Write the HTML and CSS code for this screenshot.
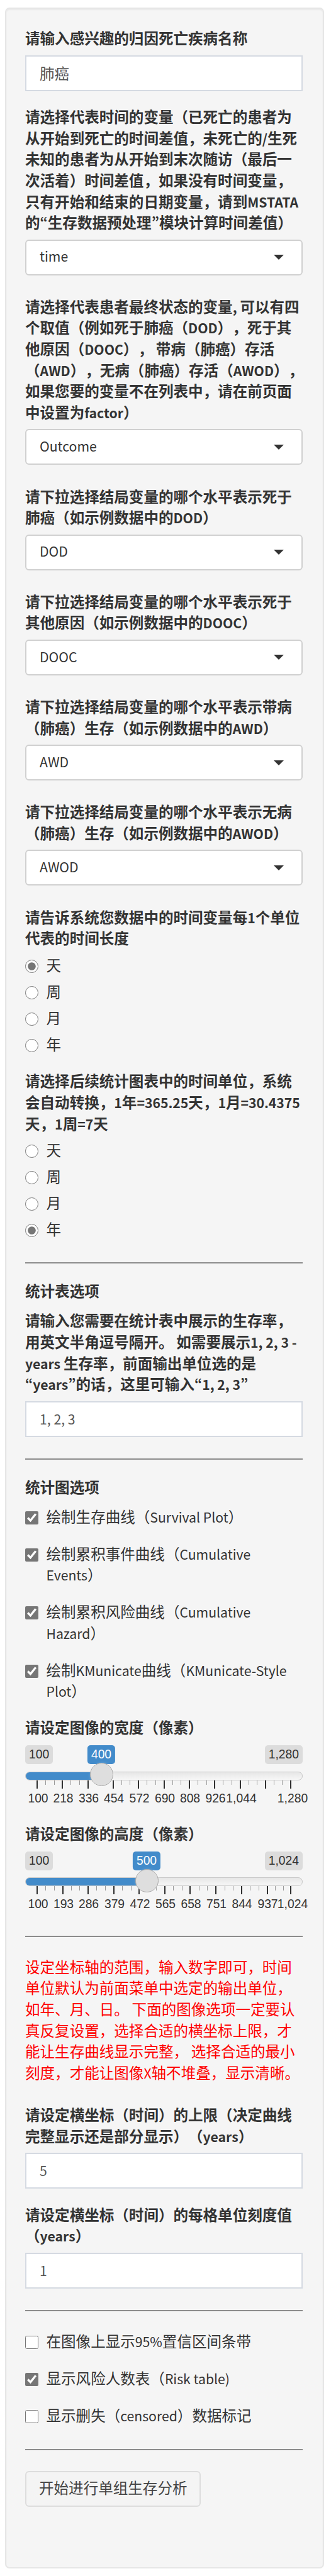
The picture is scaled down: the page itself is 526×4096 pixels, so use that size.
FILE: index.html
```html
<!DOCTYPE html>
<html lang="zh-CN">
<head>
<meta charset="utf-8">
<title>单组生存分析</title>
<link rel="stylesheet" href="styles.css">
</head>

<body>
<form class="well">
	<div class="form-group">
		<label class="control-label">请输入感兴趣的归因死亡疾病名称</label>
		<input type="text" class="form-control zh" value="肺癌">
	</div>

	<div class="form-group select">
		<label class="control-label">请选择代表时间的变量（已死亡的患者为<br>从开始到死亡的时间差值，未死亡的<span class="l">/</span>生死<br>未知的患者为从开始到末次随访（最后一<br>次活着）时间差值，如果没有时间变量，<br>只有开始和结束的日期变量，请到<span class="l">MSTATA</span><br>的<span class="l">“</span>生存数据预处理<span class="l">”</span>模块计算时间差值）</label>
		<div class="selectize"><div><span class="l">time</span></div><i class="caret"></i></div>
	</div>

	<div class="form-group select">
		<label class="control-label">请选择代表患者最终状态的变量<span class="l">, </span>可以有四<br>个取值（例如死于肺癌（<span class="l">DOD</span>），死于其<br>他原因（<span class="l">DOOC</span>），<span class="l"> </span>带病（肺癌）存活<br>（<span class="l">AWD</span>），无病（肺癌）存活（<span class="l">AWOD</span>），<br>如果您要的变量不在列表中，请在前页面<br>中设置为<span class="l">factor</span>）</label>
		<div class="selectize"><div><span class="l">Outcome</span></div><i class="caret"></i></div>
	</div>

	<div class="form-group select">
		<label class="control-label">请下拉选择结局变量的哪个水平表示死于<br>肺癌（如示例数据中的<span class="l">DOD</span>）</label>
		<div class="selectize"><div><span class="l">DOD</span></div><i class="caret"></i></div>
	</div>

	<div class="form-group select">
		<label class="control-label">请下拉选择结局变量的哪个水平表示死于<br>其他原因（如示例数据中的<span class="l">DOOC</span>）</label>
		<div class="selectize"><div><span class="l">DOOC</span></div><i class="caret"></i></div>
	</div>

	<div class="form-group select">
		<label class="control-label">请下拉选择结局变量的哪个水平表示带病<br>（肺癌）生存（如示例数据中的<span class="l">AWD</span>）</label>
		<div class="selectize"><div><span class="l">AWD</span></div><i class="caret"></i></div>
	</div>

	<div class="form-group select">
		<label class="control-label">请下拉选择结局变量的哪个水平表示无病<br>（肺癌）生存（如示例数据中的<span class="l">AWOD</span>）</label>
		<div class="selectize"><div><span class="l">AWOD</span></div><i class="caret"></i></div>
	</div>

	<div class="form-group radios">
		<label class="control-label">请告诉系统您数据中的时间变量每<span class="l">1</span>个单位<br>代表的时间长度</label>
		<label class="radio"><input type="radio" name="unit_in" checked><span>天</span></label>
		<label class="radio"><input type="radio" name="unit_in"><span>周</span></label>
		<label class="radio"><input type="radio" name="unit_in"><span>月</span></label>
		<label class="radio"><input type="radio" name="unit_in"><span>年</span></label>
	</div>

	<div class="form-group radios">
		<label class="control-label">请选择后续统计图表中的时间单位，系统<br>会自动转换，<span class="l">1</span>年<span class="l">=365.25</span>天，<span class="l">1</span>月<span class="l">=30.4375</span><br>天，<span class="l">1</span>周<span class="l">=7</span>天</label>
		<label class="radio"><input type="radio" name="unit_out"><span>天</span></label>
		<label class="radio"><input type="radio" name="unit_out"><span>周</span></label>
		<label class="radio"><input type="radio" name="unit_out"><span>月</span></label>
		<label class="radio"><input type="radio" name="unit_out" checked><span>年</span></label>
	</div>

	<hr>

	<div class="title">统计表选项</div>
	<div class="form-group before-hr">
		<label class="control-label">请输入您需要在统计表中展示的生存率，<br>用英文半角逗号隔开。<span class="l"> </span>如需要展示<span class="l">1, 2, 3 -</span><br><span class="l">years </span>生存率，前面输出单位选的是<br><span class="l">“years”</span>的话，这里可输入<span class="l">“1, 2, 3”</span></label>
		<input type="text" class="form-control" value="1, 2, 3">
	</div>

	<hr>

	<div class="title">统计图选项</div>
	<div class="checks">
		<label class="checkbox"><input type="checkbox" checked><span>绘制生存曲线（<span class="l">Survival Plot</span>）</span></label>
		<label class="checkbox"><input type="checkbox" checked><span>绘制累积事件曲线（<span class="l">Cumulative</span><br><span class="l">Events</span>）</span></label>
		<label class="checkbox"><input type="checkbox" checked><span>绘制累积风险曲线（<span class="l">Cumulative</span><br><span class="l">Hazard</span>）</span></label>
		<label class="checkbox"><input type="checkbox" checked><span>绘制<span class="l">KMunicate</span>曲线（<span class="l">KMunicate-Style</span><br><span class="l">Plot</span>）</span></label>
	</div>

	<div class="slider">
		<label class="control-label">请设定图像的宽度（像素）</label>
		<div class="irs">
			<div class="irs-tips"><span>100</span><span>1,280</span></div>
			<div class="irs-line"><div class="irs-bar" style="width:121px"></div></div>
			<span class="irs-single" style="left:121px">400</span>
			<i class="irs-handle" style="left:121px"></i>
			<svg class="irs-grid" width="440" height="46">
				<path class="small" d="M32.5 0v7M46.5 0v7M72.5 0v7M86.5 0v7M113.5 0v7M126.5 0v7M153.5 0v7M166.5 0v7M193.5 0v7M207.5 0v7M234.5 0v7M247.5 0v7M274.5 0v7M288.5 0v7M314.5 0v7M328.5 0v7M355.5 0v7M368.5 0v7M395.5 0v7M408.5 0v7"/>
				<path class="big" d="M19 0v13M59 0v13M100 0v13M140 0v13M180 0v13M221 0v13M261 0v13M301 0v13M342 0v13M382 0v13M422 0v13"/>
				<text x="20.5" y="35">100</text><text x="60.5" y="35">218</text><text x="101" y="35">336</text><text x="141" y="35">454</text><text x="181.5" y="35">572</text><text x="222" y="35">690</text><text x="262" y="35">808</text><text x="302.5" y="35">926</text><text x="343.5" y="35">1,044</text><text x="425" y="35">1,280</text>
			</svg>
		</div>
	</div>

	<div class="slider">
		<label class="control-label">请设定图像的高度（像素）</label>
		<div class="irs">
			<div class="irs-tips"><span>100</span><span>1,024</span></div>
			<div class="irs-line"><div class="irs-bar" style="width:193px"></div></div>
			<span class="irs-single" style="left:193px">500</span>
			<i class="irs-handle" style="left:193px"></i>
			<svg class="irs-grid" width="440" height="46">
				<path class="small" d="M32.5 0v7M46.5 0v7M73.5 0v7M86.5 0v7M113.5 0v7M127.5 0v7M154.5 0v7M168.5 0v7M195.5 0v7M208.5 0v7M235.5 0v7M249.5 0v7M276.5 0v7M289.5 0v7M317.5 0v7M330.5 0v7M357.5 0v7M371.5 0v7M397.5 0v7M410.5 0v7"/>
				<path class="big" d="M19 0v13M60 0v13M100 0v13M141 0v13M181 0v13M222 0v13M262 0v13M303 0v13M344 0v13M385 0v13M422 0v13"/>
				<text x="20.5" y="35">100</text><text x="61" y="35">193</text><text x="101" y="35">286</text><text x="142" y="35">379</text><text x="182.5" y="35">472</text><text x="223" y="35">565</text><text x="263.5" y="35">658</text><text x="304" y="35">751</text><text x="344.5" y="35">844</text><text x="385.5" y="35">937</text><text x="425" y="35">1,024</text>
			</svg>
		</div>
	</div>

	<hr class="after-slider">

	<p class="warn">设定坐标轴的范围，输入数字即可，时间<br>单位默认为前面菜单中选定的输出单位，<br>如年、月、日。<span class="l"> </span>下面的图像选项一定要认<br>真反复设置，选择合适的横坐标上限，才<br>能让生存曲线显示完整，<span class="l"> </span>选择合适的最小<br>刻度，才能让图像<span class="l">X</span>轴不堆叠，显示清晰。</p>

	<div class="form-group">
		<label class="control-label">请设定横坐标（时间）的上限（决定曲线<br>完整显示还是部分显示）（<span class="l">years</span>）</label>
		<input type="text" class="form-control" value="5">
	</div>
	<div class="form-group before-hr">
		<label class="control-label">请设定横坐标（时间）的每格单位刻度值<br>（<span class="l">years</span>）</label>
		<input type="text" class="form-control" value="1">
	</div>

	<hr>

	<div class="checks last">
		<label class="checkbox"><input type="checkbox"><span>在图像上显示<span class="l">95%</span>置信区间条带</span></label>
		<label class="checkbox"><input type="checkbox" checked><span>显示风险人数表（<span class="l">Risk table)</span></span></label>
		<label class="checkbox"><input type="checkbox"><span>显示删失（<span class="l">censored</span>）数据标记</span></label>
	</div>

	<hr>

	<button type="button" class="btn">开始进行单组生存分析</button>
</form>
</body>
</html>
```

FILE: styles.css
```css
* {box-sizing:border-box;}
body {margin:0;background:#fff;color:#333;font:23.55px/33.62px "Liberation Sans","Noto Sans CJK SC",sans-serif;text-spacing-trim:space-all;}
/* latin runs are set a little smaller than the hanzi */
.l {font-family:"Noto Sans CJK SC",sans-serif;font-size:21.2px;line-height:1;font-feature-settings:"pwid";white-space:pre;}

.well {width:507px;height:4072px;margin:12px 0 0 7.5px;padding:32.2px 31.5px 0 30.5px;background:#f5f5f5;border:2px solid #e6e6e6;border-radius:7px;box-shadow:inset 0 2px 2px rgba(0,0,0,.05);}

.control-label {display:block;margin-bottom:7.8px;font-weight:700;white-space:nowrap;}
.form-group {margin-bottom:26.2px;}
.form-group.select {margin-bottom:35.1px;}
.form-group.before-hr {margin-bottom:34px;}
.form-control {display:block;width:100%;height:57.3px;padding:0 21px 2px;border:2px solid #d5dae2;border-radius:0;background:#fff;color:#555;font:21.2px "Noto Sans CJK SC",sans-serif;outline:0;}
.form-control.zh {padding-bottom:0;font:23.55px "Liberation Sans","Noto Sans CJK SC",sans-serif;}
.selectize {display:flex;align-items:center;justify-content:space-between;height:57.1px;padding:0 28px 0 21px;border:2px solid #d0d0d0;border-radius:6px;background:#fff;}
.caret {border:8px solid transparent;border-top-color:#333;border-bottom:0;}

input[type=radio],input[type=checkbox] {flex:none;width:21px;height:21px;margin:6px 12.5px 0 0;accent-color:#767676;}
.radio,.checkbox {display:flex;align-items:flex-start;white-space:nowrap;}
.radios {margin-bottom:25px;}
.radios .control-label {margin-bottom:9.2px;}
.radio {margin-bottom:8.3px;}

hr {height:2px;margin:0;border:0;background:#8c8c8c;}
.radios + hr {margin-top:33.5px;}
.after-slider {margin-top:8.5px;}
.title {margin:29px 0 13.5px;font-weight:700;}

.checks {display:flex;flex-direction:column;gap:25.1px;margin-bottom:24.6px;}
.checks.last {gap:25.5px;margin:33.3px 0 33.8px;}

/* sliders */
.slider {height:168.7px;}
.slider .control-label {margin-bottom:9px;}
.irs {position:relative;font:19.3px/29px "Liberation Sans",Arial,sans-serif;}
.irs-tips {display:flex;justify-content:space-between;height:30px;margin-bottom:11.5px;}
.irs-tips span {padding:0 6px;border-radius:5px;background:#dcdcdc;}
.irs-line {height:14px;overflow:hidden;border:1px solid #c8c8c8;border-radius:7px;background:linear-gradient(#dedede -50%,#fff 150%);}
.irs-bar {height:14px;margin:-1px;background:#428bca;}
.irs-single {position:absolute;top:0;height:30px;padding:0 6px;border-radius:5px;background:#428bca;color:#fff;transform:translateX(-50%);}
.irs-handle {position:absolute;top:28px;width:37px;height:37px;margin-left:-18.5px;border:1px solid #aaa;border-radius:50%;background:#dedede;box-shadow:1px 1px 5px rgba(255,255,255,.3);}
.irs-grid {display:block;overflow:visible;}
.irs-grid .small {stroke:#999;stroke-width:1;}
.irs-grid .big {stroke:#000;stroke-width:1.6;}
.irs-grid text {fill:#333;text-anchor:middle;}

.warn {margin:32.5px 0 33.5px;color:#f00;white-space:nowrap;}

.btn {display:block;height:57px;margin-top:33.5px;padding:0 20px;border:2px solid #ddd;border-radius:6px;background:#f4f4f4;color:#444;font:inherit;}
```
